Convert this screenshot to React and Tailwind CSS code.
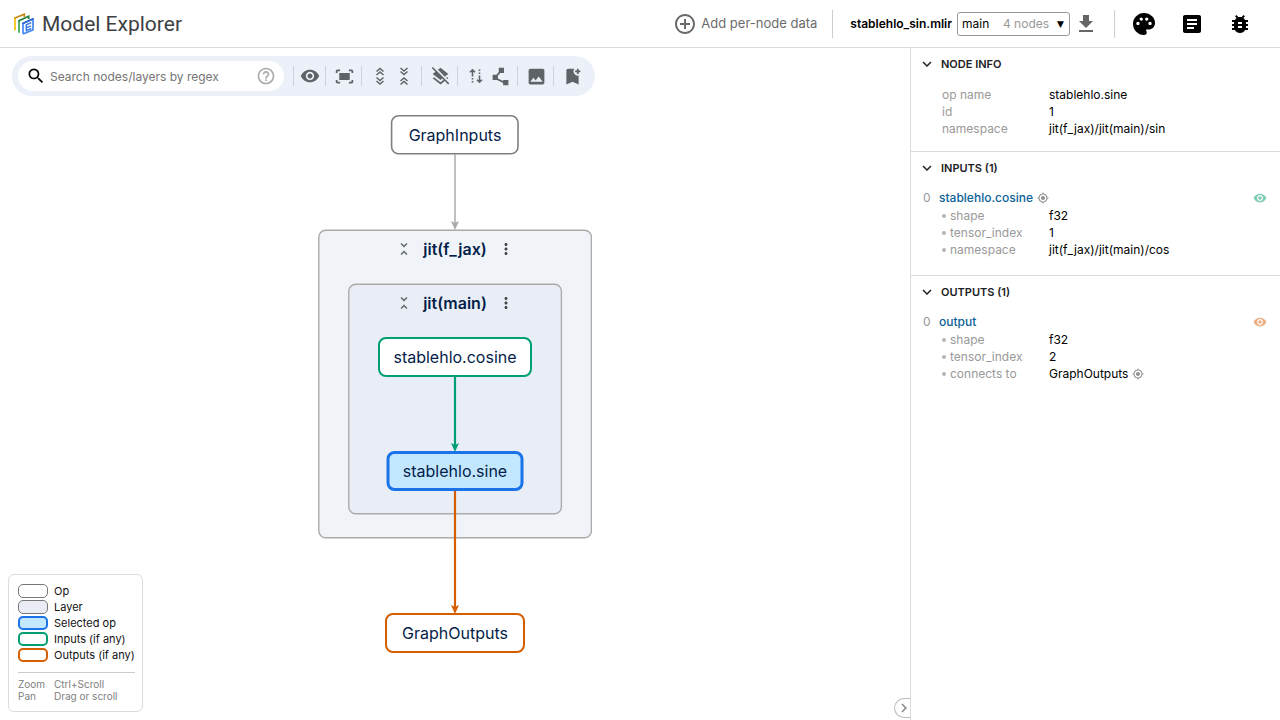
import React from 'react';
import {
  MdSearch, MdHelpOutline, MdVisibility, MdFitScreen, MdLayersClear, MdPolyline, MdImage,
  MdBookmarkAdd, MdAddCircleOutline, MdDownload, MdPalette, MdArticle, MdBugReport,
  MdExpandMore, MdMyLocation, MdUnfoldLess, MdMoreVert, MdChevronRight,
} from 'react-icons/md';

function Logo() {
  return (
    <svg viewBox="0 0 60 66" className="h-[22px] w-5 shrink-0" fill="none" strokeWidth="5" aria-hidden="true">
      <path d="M3 52V15" stroke="#fbbc04" />
      <path d="M1 16L31 3.5V12" stroke="#c78a12" />
      <path d="M15 59V24" stroke="#34a853" />
      <path d="M13 24L44 10V18" stroke="#188038" />
      <path d="M27 62V31L57 18V51L27 63" stroke="#4285f4" />
      <path d="M25 32L58 17.5" stroke="#2f62c4" />
      <path d="M52 29L37 35.5V53L52 46.5M37 44.5L51 38.5" stroke="#3b78e7" strokeWidth="4.5" />
    </svg>
  );
}

function UnfoldDouble() {
  return (
    <svg viewBox="0 0 20 20" className="size-5" fill="none" stroke="currentColor" strokeWidth="1.5" aria-hidden="true">
      <path d="M6.5 5.5L10 2.5L13.5 5.5M6.5 9L10 6L13.5 9M6.5 11.5L10 14.5L13.5 11.5M6.5 15L10 18L13.5 15" />
    </svg>
  );
}

function FoldDouble() {
  return (
    <svg viewBox="0 0 20 20" className="size-5" fill="none" stroke="currentColor" strokeWidth="1.5" aria-hidden="true">
      <path d="M6.5 2L10 5L13.5 2M6.5 5.5L10 8.5L13.5 5.5M6.5 15L10 12L13.5 15M6.5 18.5L10 15.5L13.5 18.5" />
    </svg>
  );
}

function TraceIcon() {
  return (
    <svg viewBox="0 0 20 20" className="size-5" fill="none" stroke="currentColor" strokeWidth="1.6" aria-hidden="true">
      <path d="M6.5 10.5V4M4 6.3L6.5 3.8L9 6.3M13.5 9.5V16M11 13.7L13.5 16.2L16 13.7" />
      <path d="M6.5 12V13.5M6.5 15V16.5M13.5 3.5V5M13.5 6.5V8" />
    </svg>
  );
}

const toolGroups = [
  [['Show on node', MdVisibility, 'size-5']],
  [['Fit to screen', MdFitScreen, 'size-[21px]']],
  [['Expand all layers', UnfoldDouble, ''], ['Collapse all layers', FoldDouble, '']],
  [['Flatten layers', MdLayersClear, 'size-[21px]']],
  [['Trace', TraceIcon, ''], ['Edge overlays', MdPolyline, 'size-[21px]']],
  [['Download as image', MdImage, 'size-[21px]']],
  [['Bookmark', MdBookmarkAdd, 'size-[21px]']],
];

function Toolbar() {
  return (
    <div className="relative z-10 mx-3 mt-2 flex h-10 w-fit items-center rounded-full bg-[#ecf0f9] pr-1.5 pl-1.5 text-[#5f6368]">
      <label className="mr-[9px] flex h-[30px] w-[266px] items-center rounded-full bg-white px-2">
        <MdSearch className="size-5 shrink-0 text-black" />
        <input
          type="text"
          aria-label="Search nodes/layers by regex"
          placeholder="Search nodes/layers by regex"
          className="ml-1 min-w-0 flex-1 pt-0.5 text-xs outline-none placeholder:text-[#757575]"
        />
        <MdHelpOutline className="size-5 shrink-0 text-[#aaa]" />
      </label>
      {toolGroups.map((group, i) => (
        <div
          key={i}
          className={'flex gap-1 border-l border-[#cfd2d8] ' + (i === 0 ? 'pr-[5px] pl-1.5' : 'pr-[7px] pl-2')}
        >
          {group.map(([label, Icon, size]) => (
            <button key={label} type="button" aria-label={label} className="flex size-5 items-center justify-center">
              <Icon className={'shrink-0 ' + size} />
            </button>
          ))}
        </div>
      ))}
    </div>
  );
}

function Header() {
  return (
    <header className="flex h-12 shrink-0 items-center border-b border-[#dadce0] bg-white">
      <a href="#" className="flex items-center gap-2 pl-3.5 text-[#3c4043]">
        <Logo />
        <h1 className="font-[Roboto,sans-serif] text-[21px] leading-6">Model Explorer</h1>
      </a>
      <div className="ml-auto flex items-center">
        <button type="button" className="flex items-center gap-1 text-[13px] text-[#6b6b6b]">
          <MdAddCircleOutline className="size-6" />
          Add per-node data
        </button>
        <div className="mr-[17px] ml-[15px] h-7 w-px bg-[#ccc]" />
        <label htmlFor="graph" className="text-xs font-semibold">stablehlo_sin.mlir</label>
        <div className="relative ml-[5px] h-6 w-[113px] text-xs">
          <select id="graph" className="h-full w-full appearance-none rounded-[3px] border border-[#999] bg-white pl-1">
            <option>main</option>
          </select>
          <div className="pointer-events-none absolute inset-y-0 right-1.5 flex items-center gap-2">
            <span className="text-[#999]">4 nodes</span>
            <span className="font-['DejaVu_Sans',sans-serif] text-[9px]">▼</span>
          </div>
        </div>
        <button type="button" aria-label="Download graph" className="ml-1 text-[#666]">
          <MdDownload className="size-6" />
        </button>
        <div className="mr-[17px] ml-4 h-7 w-px bg-[#ccc]" />
        <div className="flex items-center gap-6 pr-7">
          <button type="button" aria-label="Theme"><MdPalette className="size-6 scale-110" /></button>
          <button type="button" aria-label="Documentation"><MdArticle className="size-6" /></button>
          <button type="button" aria-label="Report a bug"><MdBugReport className="size-6" /></button>
        </div>
      </div>
    </header>
  );
}

function LayerTitle({ children }) {
  return (
    <div className="flex h-9 items-center justify-center gap-2.5">
      <button type="button" aria-label={'Collapse ' + children}><MdUnfoldLess className="size-[18px] text-[#5f6368]" /></button>
      <span className="font-semibold">{children}</span>
      <button type="button" aria-label={'Options for ' + children}><MdMoreVert className="size-[18px] text-[#444]" /></button>
    </div>
  );
}

function Graph() {
  const node = 'absolute left-1/2 flex h-10 -translate-x-1/2 items-center justify-center rounded-lg';
  return (
    <div className="absolute top-[66px] left-1/2 h-[540px] w-[274px] -translate-x-1/2 font-[Inter,sans-serif] text-base text-[#041e49]">
      <svg viewBox="0 0 274 540" className="absolute inset-0 h-full w-full" fill="none" aria-hidden="true">
        <rect x="73.6" y="1.8" width="126.4" height="38" rx="7" fill="#fff" stroke="#808080" strokeWidth="1.6" />
        <rect x="0.8" y="116.2" width="272.6" height="307.6" rx="7" fill="#f0f4f9" stroke="#aaa" strokeWidth="1.4" />
        <rect x="30.8" y="170.2" width="212.6" height="229.6" rx="7" fill="#e9eef6" stroke="#aaa" strokeWidth="1.4" />
        <path d="M137 40V111" stroke="#aaa" strokeWidth="1.5" />
        <path d="M137 116L133 107L137 109L141 107Z" fill="#aaa" />
        <path d="M137 262V334" stroke="#009e73" strokeWidth="2.2" />
        <path d="M137 338L133 329L137 331L141 329Z" fill="#009e73" />
        <path d="M137 376V496" stroke="#d55e00" strokeWidth="2.2" />
        <path d="M137 500L133 491L137 493L141 491Z" fill="#d55e00" />
      </svg>
      <div className="absolute inset-x-0 top-[117px]"><LayerTitle>jit(f_jax)</LayerTitle></div>
      <div className="absolute inset-x-[30px] top-[171px]"><LayerTitle>jit(main)</LayerTitle></div>
      <div className={node + ' top-px w-32'}>GraphInputs</div>
      <div className={node + ' top-[223px] w-[154px] border-2 border-[#009e73] bg-white'}>stablehlo.cosine</div>
      <div className={node + ' top-[337px] w-[137px] border-3 border-[#1a73e8] bg-[#c2e7ff]'}>stablehlo.sine</div>
      <div className={node + ' top-[499px] w-[140px] border-2 border-[#d55e00] bg-white'}>GraphOutputs</div>
    </div>
  );
}

const legend = [
  ['Op', 'border border-[#777] bg-white'],
  ['Layer', 'border border-[#777] bg-[#ebedf6]'],
  ['Selected op', 'border-2 border-[#1a73e8] bg-[#c2e7ff]'],
  ['Inputs (if any)', 'border-2 border-[#009e73] bg-white'],
  ['Outputs (if any)', 'border-2 border-[#d55e00] bg-white'],
];

function Legend() {
  return (
    <div className="absolute bottom-2 left-2 rounded-md border border-[#dadce0] bg-white pt-2 pr-[7px] pb-[9px] pl-[9px]">
      <ul className="text-[11px] leading-4 text-[#111]">
        {legend.map(([label, style]) => (
          <li key={label} className="flex items-center gap-1.5">
            <span className={'h-3.5 w-[30px] rounded-[5px] ' + style} />
            {label}
          </li>
        ))}
      </ul>
      <dl className="mt-[9px] grid grid-cols-[30px_1fr] gap-x-1.5 border-t border-[#ccc] pt-[5px] text-[10px] leading-3 text-[#808080]">
        <dt>Zoom</dt><dd>Ctrl+Scroll</dd>
        <dt>Pan</dt><dd>Drag or scroll</dd>
      </dl>
    </div>
  );
}

function Section({ title, children }) {
  return (
    <section className="border-b border-[#dadce0] last:border-b-0">
      <h2>
        <button type="button" aria-expanded="true" className="flex h-8 w-full items-center gap-[5px] pl-[7px] text-[11px] font-semibold text-[#202124]">
          <MdExpandMore className="size-[18px]" />
          {title}
        </button>
      </h2>
      {children}
    </section>
  );
}

function Row({ name, bullet, children }) {
  return (
    <div className="flex h-[17px] items-center">
      <dt className="flex w-[107px] shrink-0 items-center gap-1 text-[#999]">
        {bullet && <span className="size-1 rounded-full bg-[#b5b5b5]" />}
        {name}
      </dt>
      <dd className="flex items-center gap-1 text-black">{children}</dd>
    </div>
  );
}

function Locate({ label }) {
  return (
    <button type="button" aria-label={'Locate ' + label} className="text-[#8f8f8f]">
      <MdMyLocation className="size-3" />
    </button>
  );
}

function Item({ name, locate, eye, children }) {
  return (
    <div className="pt-[5px] pb-[17px]">
      <div className="flex h-[18px] items-center pr-[13px] pl-3">
        <span className="w-4 text-[#999]">0</span>
        <a href="#" className="mr-1 font-medium text-[#0b6198]">{name}</a>
        {locate && <Locate label={name} />}
        <button type="button" aria-label={'Toggle ' + name} className={'ml-auto ' + eye}>
          <MdVisibility className="size-3.5" />
        </button>
      </div>
      <dl className="pl-[31px]">{children}</dl>
    </div>
  );
}

function SidePanel() {
  return (
    <aside className="w-[370px] shrink-0 border-l border-[#dadce0] bg-white text-xs">
      <Section title="NODE INFO">
        <dl className="pt-1.5 pb-3.5 pl-[31px]">
          <Row name="op name">stablehlo.sine</Row>
          <Row name="id">1</Row>
          <Row name="namespace">jit(f_jax)/jit(main)/sin</Row>
        </dl>
      </Section>
      <Section title="INPUTS (1)">
        <Item name="stablehlo.cosine" locate eye="text-[#80ceb9]">
          <Row bullet name="shape">f32</Row>
          <Row bullet name="tensor_index">1</Row>
          <Row bullet name="namespace">jit(f_jax)/jit(main)/cos</Row>
        </Item>
      </Section>
      <Section title="OUTPUTS (1)">
        <Item name="output" eye="text-[#eaae80]">
          <Row bullet name="shape">f32</Row>
          <Row bullet name="tensor_index">2</Row>
          <Row bullet name="connects to">GraphOutputs <Locate label="GraphOutputs" /></Row>
        </Item>
      </Section>
    </aside>
  );
}

export default function App() {
  return (
    <div className="flex min-h-screen flex-col bg-white font-[Inter,sans-serif] text-black">
      <Header />
      <div className="flex flex-1">
        <main className="relative min-w-0 flex-1 overflow-hidden">
          <Toolbar />
          <Graph />
          <Legend />
          <button
            type="button"
            aria-label="Collapse side panel"
            className="absolute right-0 bottom-0.5 flex h-5 w-4 items-center justify-center rounded-l-full border border-r-0 border-[#bbb] bg-white pl-0.5 text-[#888]"
          >
            <MdChevronRight className="size-[18px] shrink-0" />
          </button>
        </main>
        <SidePanel />
      </div>
    </div>
  );
}
